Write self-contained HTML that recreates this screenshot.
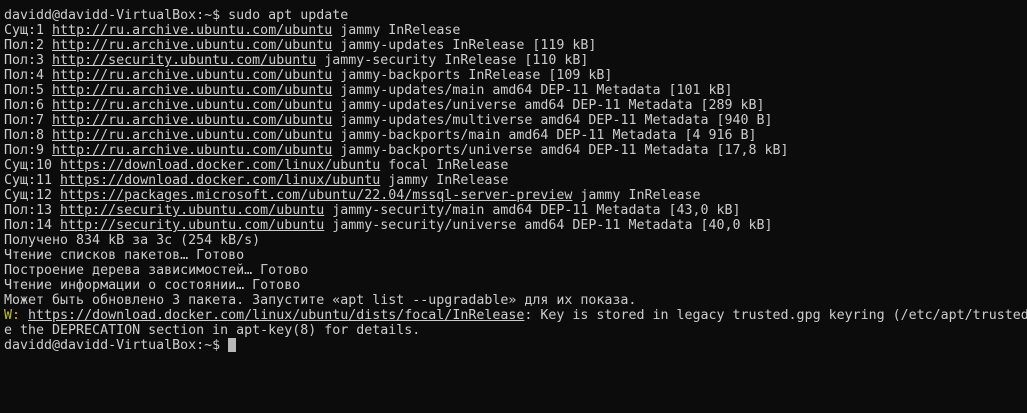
<!DOCTYPE html>
<html><head><meta charset="utf-8"><style>
html,body{margin:0;padding:0;background:#0c0c0c;width:1027px;height:413px;overflow:hidden}
pre{margin:0;padding:8px 0 0 4px;font-family:"DejaVu Sans Mono","Liberation Mono",monospace;font-size:13.3px;line-height:15px;color:#cccccc;white-space:pre}
u{text-decoration:underline}
.y{color:#c1c100}
.c{display:inline-block;width:8px;height:14px;background:#b8b8b8;vertical-align:-3px}
</style></head><body><pre>davidd@davidd-VirtualBox:~$ sudo apt update
Сущ:1 <u>http://ru.archive.ubuntu.com/ubuntu</u> jammy InRelease
Пол:2 <u>http://ru.archive.ubuntu.com/ubuntu</u> jammy-updates InRelease [119 kB]
Пол:3 <u>http://security.ubuntu.com/ubuntu</u> jammy-security InRelease [110 kB]
Пол:4 <u>http://ru.archive.ubuntu.com/ubuntu</u> jammy-backports InRelease [109 kB]
Пол:5 <u>http://ru.archive.ubuntu.com/ubuntu</u> jammy-updates/main amd64 DEP-11 Metadata [101 kB]
Пол:6 <u>http://ru.archive.ubuntu.com/ubuntu</u> jammy-updates/universe amd64 DEP-11 Metadata [289 kB]
Пол:7 <u>http://ru.archive.ubuntu.com/ubuntu</u> jammy-updates/multiverse amd64 DEP-11 Metadata [940 B]
Пол:8 <u>http://ru.archive.ubuntu.com/ubuntu</u> jammy-backports/main amd64 DEP-11 Metadata [4 916 B]
Пол:9 <u>http://ru.archive.ubuntu.com/ubuntu</u> jammy-backports/universe amd64 DEP-11 Metadata [17,8 kB]
Сущ:10 <u>https://download.docker.com/linux/ubuntu</u> focal InRelease
Сущ:11 <u>https://download.docker.com/linux/ubuntu</u> jammy InRelease
Сущ:12 <u>https://packages.microsoft.com/ubuntu/22.04/mssql-server-preview</u> jammy InRelease
Пол:13 <u>http://security.ubuntu.com/ubuntu</u> jammy-security/main amd64 DEP-11 Metadata [43,0 kB]
Пол:14 <u>http://security.ubuntu.com/ubuntu</u> jammy-security/universe amd64 DEP-11 Metadata [40,0 kB]
Получено 834 kB за 3с (254 kB/s)
Чтение списков пакетов… Готово
Построение дерева зависимостей… Готово
Чтение информации о состоянии… Готово
Может быть обновлено 3 пакета. Запустите «apt list --upgradable» для их показа.
<span class="y">W:</span> <u>https://download.docker.com/linux/ubuntu/dists/focal/InRelease</u>: Key is stored in legacy trusted.gpg keyring (/etc/apt/trusted
e the DEPRECATION section in apt-key(8) for details.
davidd@davidd-VirtualBox:~$ <span class="c"></span></pre></body></html>
